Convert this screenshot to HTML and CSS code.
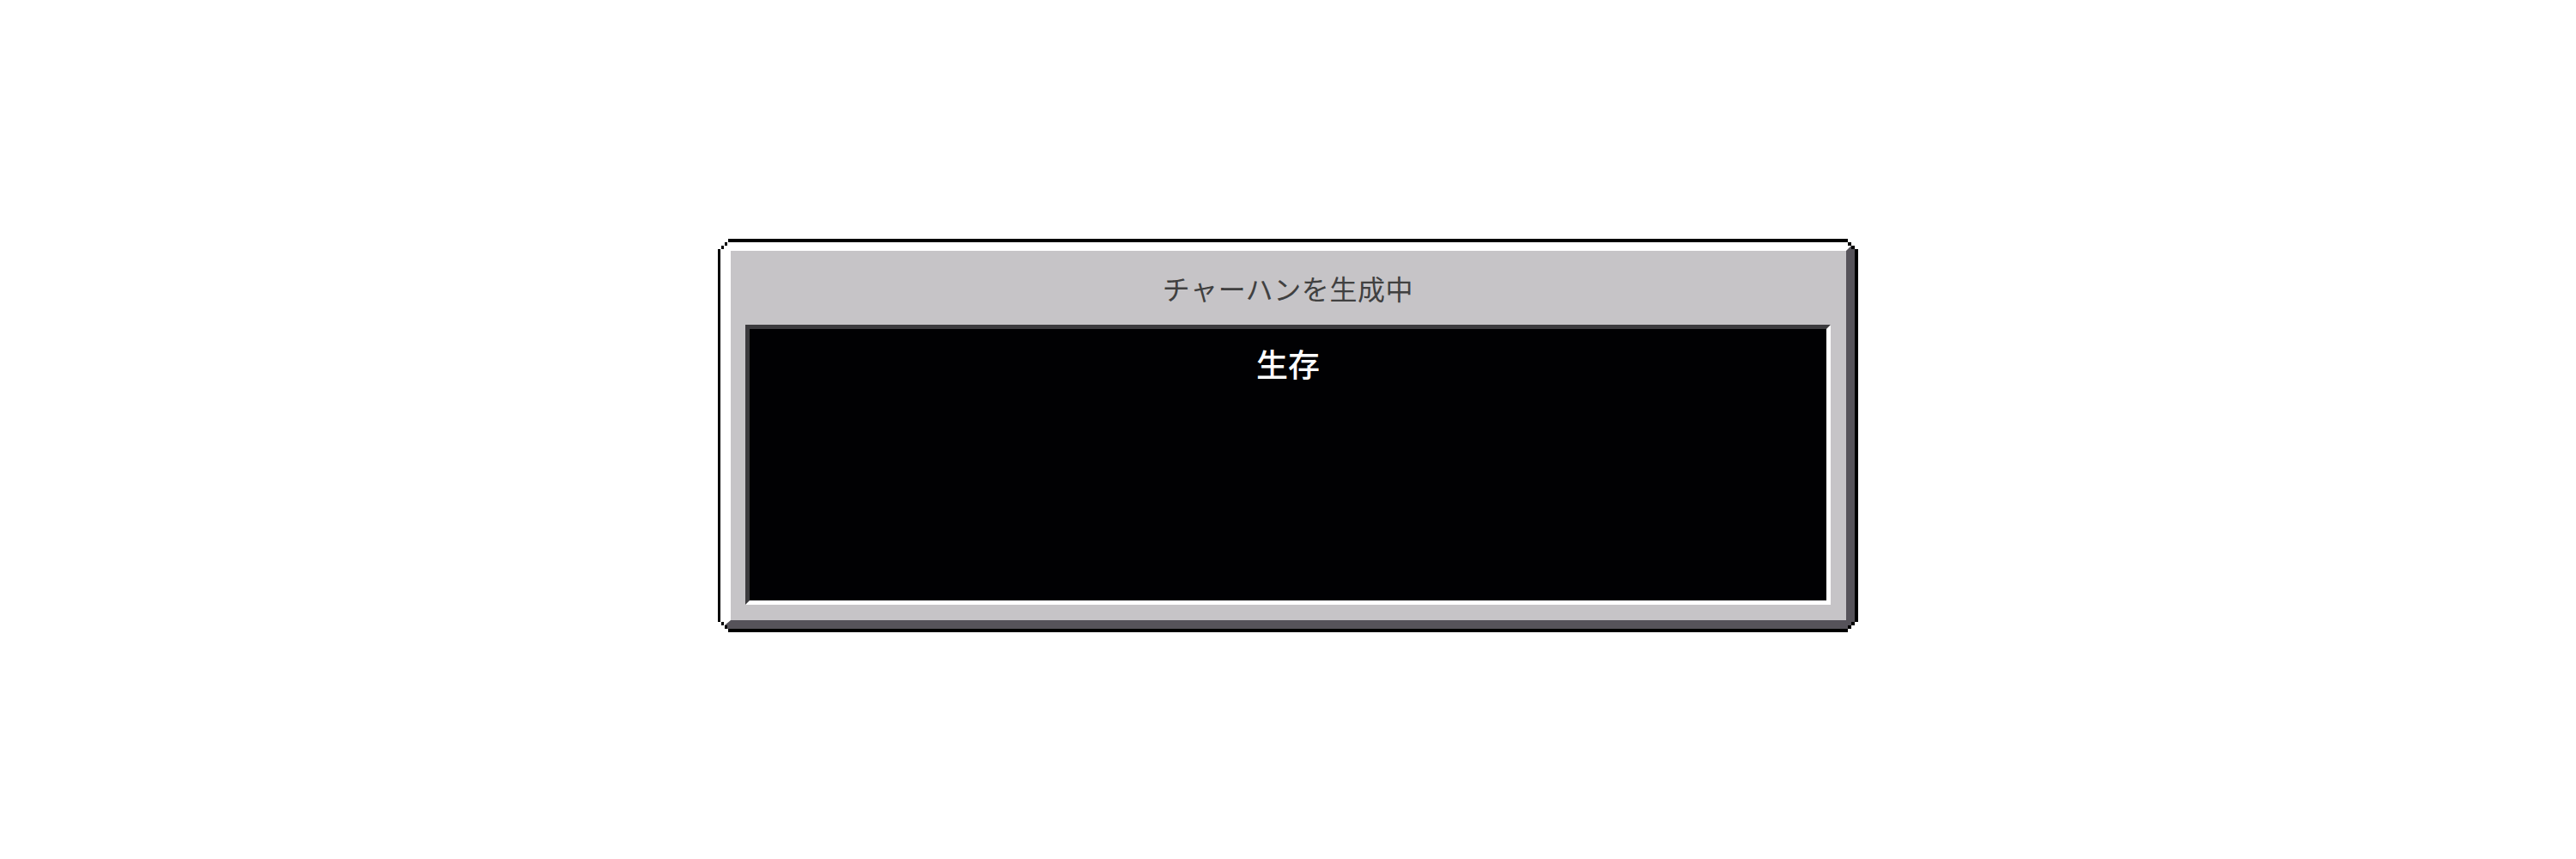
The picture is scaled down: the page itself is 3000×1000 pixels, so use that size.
FILE: index.html
```html
<!DOCTYPE html>
<html lang="ja">
<head>
<meta charset="utf-8">
<title>チャーハンを生成中</title>
<link rel="stylesheet" href="styles.css">
</head>
<body>
<div class="page">
  <div class="frame">
    <div class="bevel">
      <div class="title">チャーハンを生成中</div>
      <div class="panel">
        <div class="status">生存</div>
      </div>
    </div>
  </div>
</div>
</body>
</html>
```
FILE: styles.css
```css
html, body {
  margin: 0;
  padding: 0;
  background: #ffffff;
}

.page {
  width: 3000px;
  height: 1000px;
  box-sizing: border-box;
  padding-top: 278px;
  display: flex;
  justify-content: center;
  align-items: flex-start;
  font-family: "Noto Sans CJK JP", "Noto Sans", sans-serif;
}

.frame {
  width: 1328px;
  height: 458px;
  box-sizing: border-box;
  background: #000000;
  padding: 4px 4px 4px 3px;
  clip-path: polygon(
    0 12px, 4px 12px, 4px 8px, 8px 8px, 8px 4px, 12px 4px, 12px 0,
    calc(100% - 12px) 0, calc(100% - 12px) 4px, calc(100% - 8px) 4px, calc(100% - 8px) 8px, calc(100% - 4px) 8px, calc(100% - 4px) 12px, 100% 12px,
    100% calc(100% - 12px), calc(100% - 4px) calc(100% - 12px), calc(100% - 4px) calc(100% - 8px), calc(100% - 8px) calc(100% - 8px), calc(100% - 8px) calc(100% - 4px), calc(100% - 12px) calc(100% - 4px), calc(100% - 12px) 100%,
    12px 100%, 12px calc(100% - 4px), 8px calc(100% - 4px), 8px calc(100% - 8px), 4px calc(100% - 8px), 4px calc(100% - 12px), 0 calc(100% - 12px)
  );
}

.bevel {
  height: 100%;
  box-sizing: border-box;
  background: #c6c4c7;
  border-style: solid;
  border-width: 10px 10px 10px 12px;
  border-color: #ffffff #56535a #56535a #ffffff;
  padding: 0 18px 18px 17px;
  display: flex;
  flex-direction: column;
  clip-path: polygon(
    0 8px, 4px 8px, 4px 4px, 8px 4px, 8px 0,
    calc(100% - 8px) 0, calc(100% - 8px) 4px, calc(100% - 4px) 4px, calc(100% - 4px) 8px, 100% 8px,
    100% calc(100% - 8px), calc(100% - 4px) calc(100% - 8px), calc(100% - 4px) calc(100% - 4px), calc(100% - 8px) calc(100% - 4px), calc(100% - 8px) 100%,
    8px 100%, 8px calc(100% - 4px), 4px calc(100% - 4px), 4px calc(100% - 8px), 0 calc(100% - 8px)
  );
}

.title {
  height: 86px;
  line-height: 86px;
  text-align: center;
  font-size: 32px;
  letter-spacing: 0.6px;
  color: #404040;
  white-space: nowrap;
}

.panel {
  flex: 1;
  box-sizing: border-box;
  background: #010103;
  border-style: solid;
  border-width: 5px;
  border-color: #3c3b3e #ffffff #ffffff #3c3b3e;
  padding-top: 18px;
  text-align: center;
}

.status {
  font-size: 37px;
  line-height: 44px;
  font-weight: 500;
  color: #ffffff;
}
```
